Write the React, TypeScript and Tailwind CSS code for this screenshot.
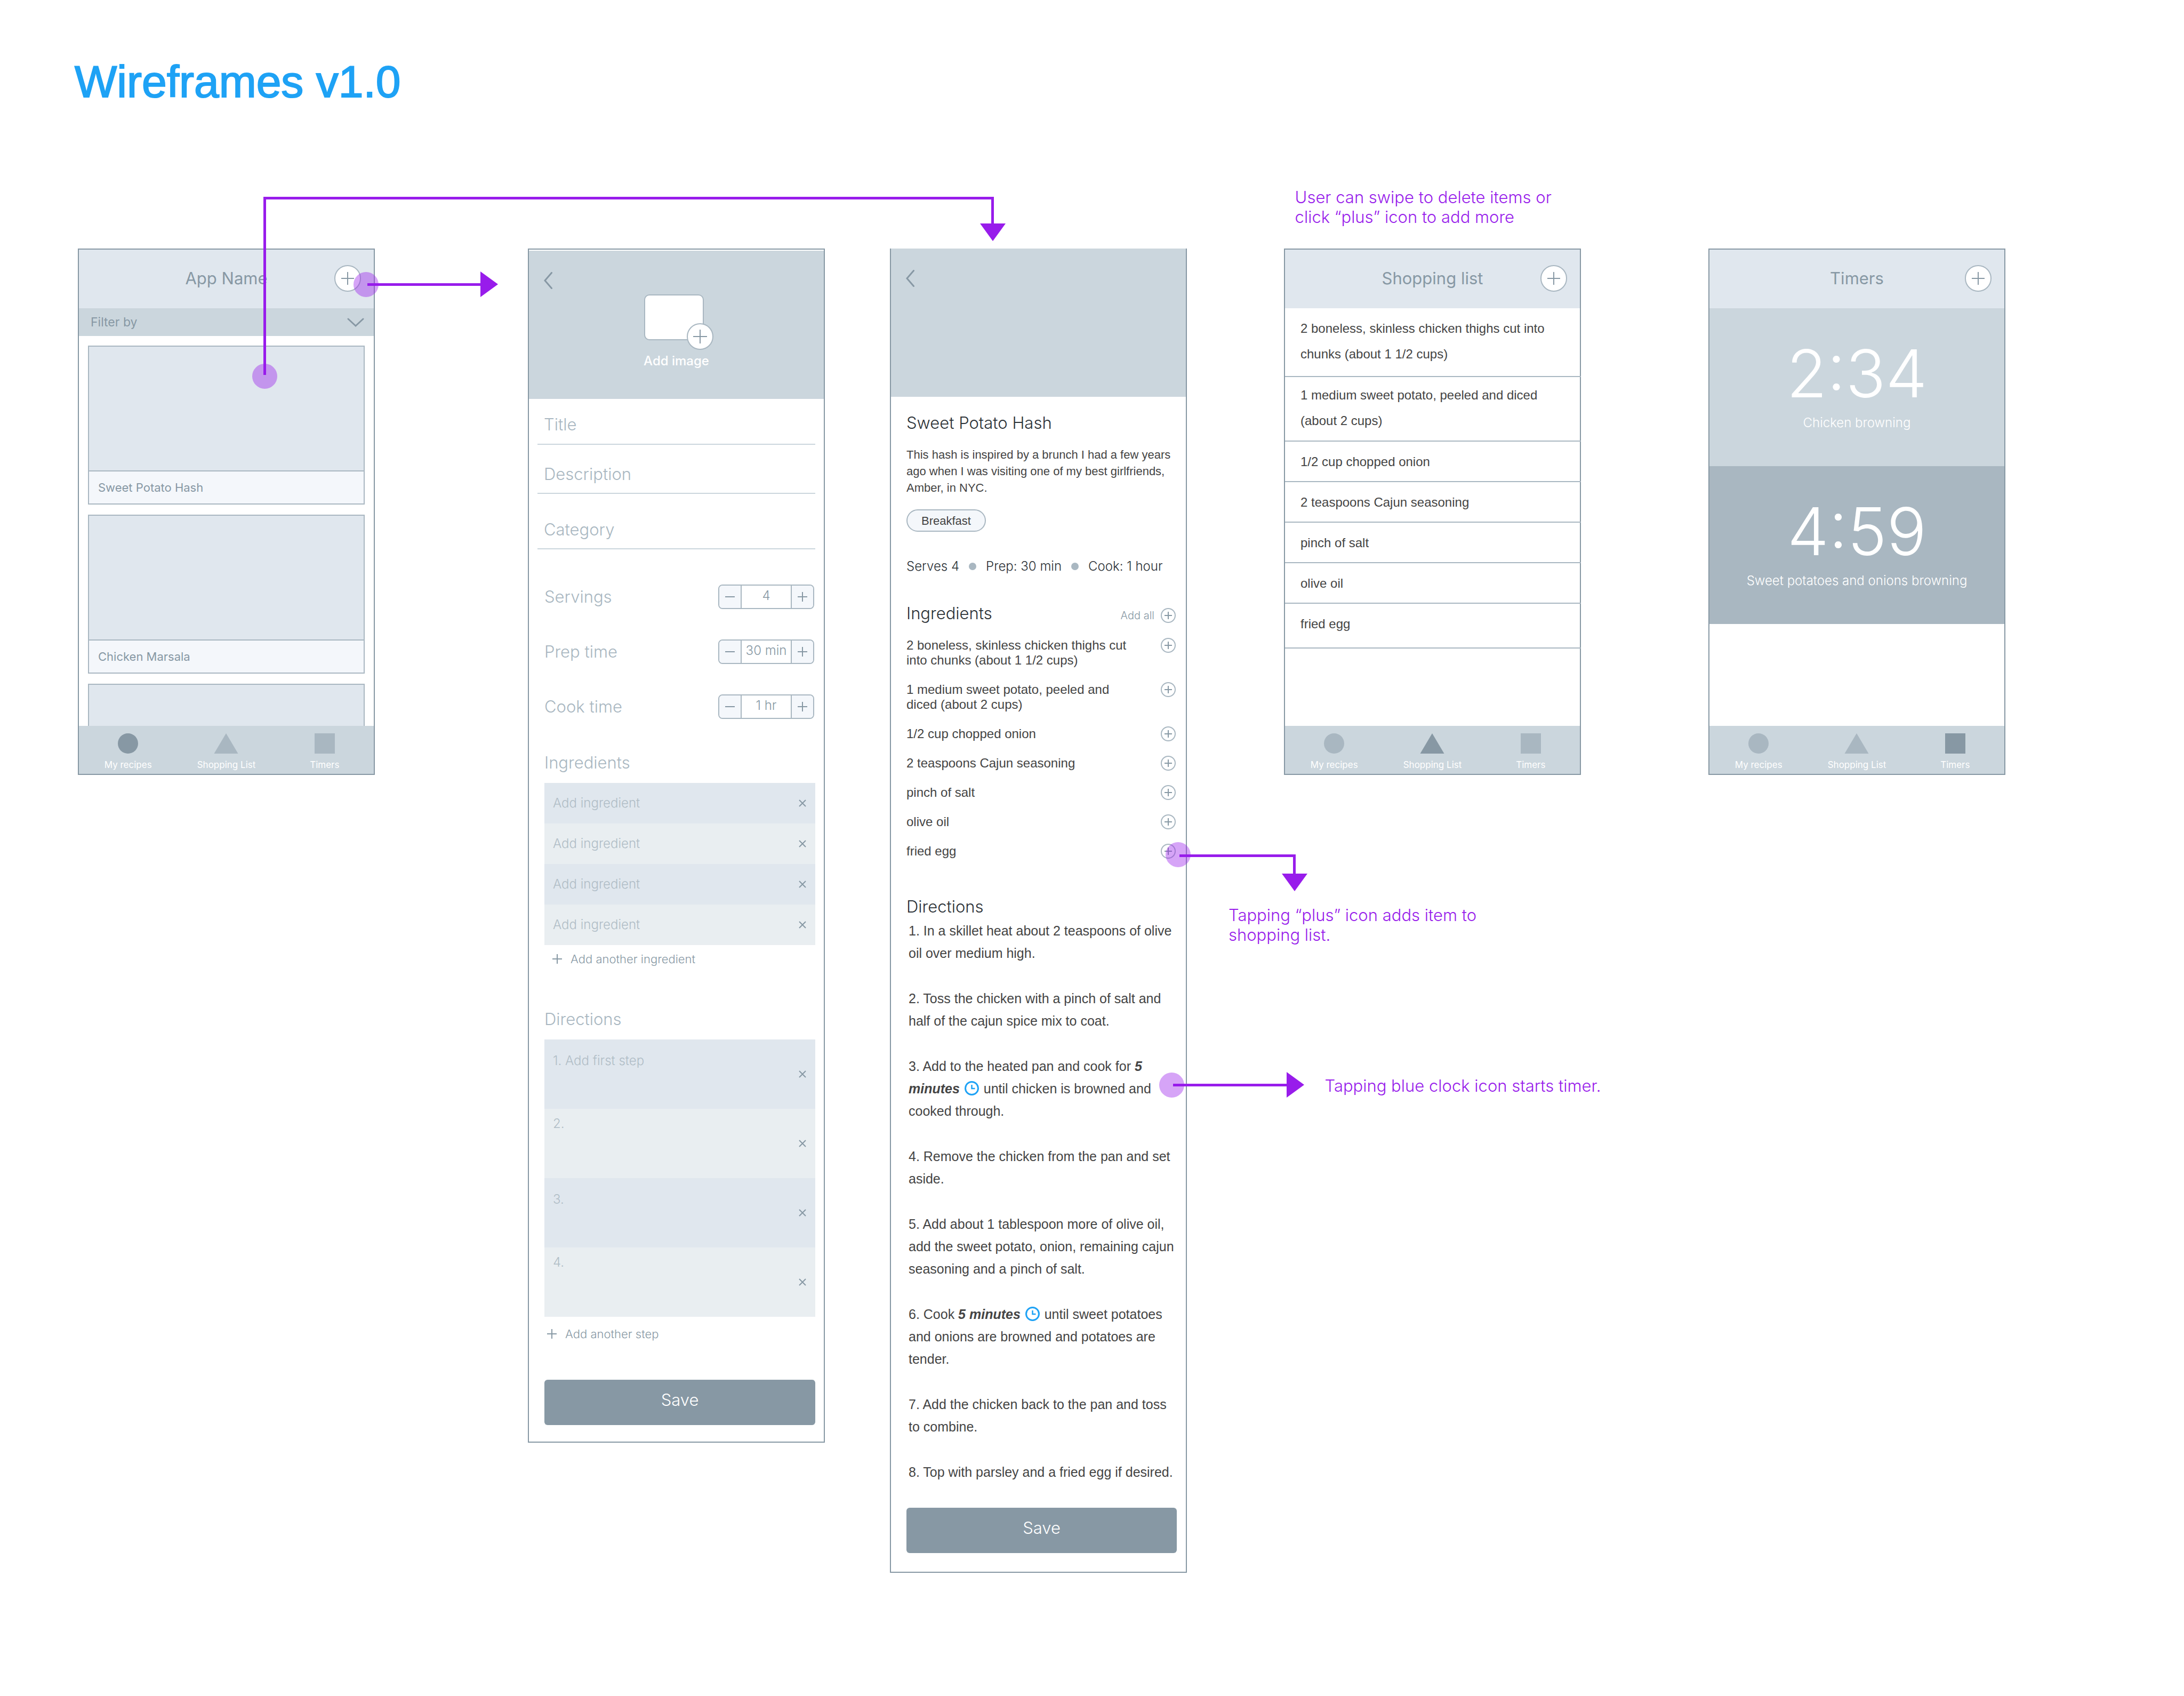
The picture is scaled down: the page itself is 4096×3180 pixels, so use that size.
import React, { useState } from "react";

const inter = "font-['Inter',sans-serif]";
const helvetica = "font-['Liberation_Sans',sans-serif]";

function PlusCircle({ label }: { label: string }) {
  return (
    <button type="button" aria-label={label} className="block size-[50px] shrink-0 justify-self-end">
      <svg viewBox="0 0 50 50" className="size-full" fill="none">
        <circle cx="25" cy="25" r="24" fill="#fff" stroke="#a9b7c1" strokeWidth="2" />
        <path d="M25 13v24M13 25h24" stroke="#8798a4" strokeWidth="2" />
      </svg>
    </button>
  );
}

function SmallPlusCircle({ label }: { label: string }) {
  return (
    <button type="button" aria-label={label} className="mr-0.5 block size-7 shrink-0">
      <svg viewBox="0 0 28 28" className="size-full" fill="none">
        <circle cx="14" cy="14" r="13" stroke="#a9b7c1" strokeWidth="2" />
        <path d="M14 7v14M7 14h14" stroke="#8798a4" strokeWidth="2" />
      </svg>
    </button>
  );
}

function Plus() {
  return (
    <svg viewBox="0 0 18 18" className="size-[18px] shrink-0" fill="none" aria-hidden="true">
      <path d="M9 0v18M0 9h18" stroke="#8798a4" strokeWidth="2" />
    </svg>
  );
}

function Minus() {
  return (
    <svg viewBox="0 0 18 18" className="size-[18px]" fill="none" aria-hidden="true">
      <path d="M0 9h18" stroke="#8798a4" strokeWidth="2" />
    </svg>
  );
}

function RemoveButton({ label }: { label: string }) {
  return (
    <button type="button" aria-label={label} className="flex w-12 items-center justify-center">
      <svg viewBox="0 0 14 14" className="size-[14px]" fill="none" aria-hidden="true">
        <path d="M1 1l12 12M13 1L1 13" stroke="#8798a4" strokeWidth="2" />
      </svg>
    </button>
  );
}

function BackButton() {
  return (
    <button type="button" aria-label="Back" className="absolute left-7 top-10 h-8 w-4">
      <svg viewBox="0 0 16 32" className="size-full" fill="none">
        <path d="M14.500 1.500L2 16l12.500 14.500" stroke="#8798a4" strokeWidth="3" strokeLinecap="round" />
      </svg>
    </button>
  );
}

function Clock() {
  return (
    <button type="button" aria-label="Start timer" className="mx-0.5 inline-block size-[27px] align-[-4px]">
      <svg viewBox="0 0 27 27" className="size-full" fill="none">
        <circle cx="13.500" cy="13.500" r="12" stroke="#1ea2f5" strokeWidth="3" />
        <path d="M13.500 7v7h6" stroke="#1ea2f5" strokeWidth="2.500" />
      </svg>
    </button>
  );
}

function AppBar({ title }: { title: string }) {
  return (
    <header className="grid h-[110px] shrink-0 grid-cols-[1fr_auto_1fr] items-center bg-[#e0e7ee] px-6 pb-0.5">
      <h2 className="col-start-2 text-[31px] leading-10 text-[#8798a4]">{title}</h2>
      <PlusCircle label="Add" />
    </header>
  );
}

function TabBar({ active }: { active: number }) {
  const tabs = [
    { label: "My recipes", shape: <circle cx="23" cy="19" r="19" /> },
    { label: "Shopping List", shape: <path d="M23 0l22.500 38H.5z" /> },
    { label: "Timers", shape: <path d="M4 0h38v38H4z" /> },
  ];
  return (
    <nav className="mt-auto grid h-[90px] shrink-0 grid-cols-3 bg-[#cbd6dd] pt-[14px]">
      {tabs.map((tab, i) => (
        <a key={tab.label} href="#" className="flex flex-col items-center gap-[11px]">
          <svg viewBox="0 0 46 38" className={i === active ? "h-[38px] w-[46px] fill-[#8798a4]" : "h-[38px] w-[46px] fill-[#a9b7c1]"} aria-hidden="true">
            {tab.shape}
          </svg>
          <span className="text-[17px] leading-5 text-white">{tab.label}</span>
        </a>
      ))}
    </nav>
  );
}

function RecipesScreen() {
  return (
    <section className="flex h-[987px] flex-col border-2 border-[#8798a4] bg-white">
      <AppBar title="App Name" />
      <div className="relative h-[52px] shrink-0 bg-[#cbd6dd]">
        <select aria-label="Filter by" className="size-full appearance-none pl-[22px] text-[23px] text-[#8798a4]">
          <option>Filter by</option>
        </select>
        <svg viewBox="0 0 32 18" className="pointer-events-none absolute right-[18px] top-[18px] h-[18px] w-8" fill="none" aria-hidden="true">
          <path d="M2 2l14 13L30 2" stroke="#8798a4" strokeWidth="3" strokeLinecap="round" />
        </svg>
      </div>
      <ul className="flex min-h-0 flex-1 flex-col gap-[19px] overflow-hidden px-[17px] pt-[18px]">
        {["Sweet Potato Hash", "Chicken Marsala", ""].map((name) => (
          <li key={name} className="flex h-[298px] shrink-0 flex-col border-2 border-[#a9b7c1]">
            <div className="flex-1 border-b-2 border-[#a9b7c1] bg-[#e0e7ee]" />
            <p className="flex h-[60px] items-center bg-[#f4f7fb] px-[17px] text-[22px] text-[#8798a4]">{name}</p>
          </li>
        ))}
      </ul>
      <TabBar active={0} />
    </section>
  );
}

function Field({ label, className }: { label: string; className: string }) {
  return (
    <div className={`mx-4 flex items-center border-b-2 border-[#cbd6dd] ${className}`}>
      <input
        aria-label={label}
        placeholder={label}
        className="w-full pl-3 text-[31px] leading-10 font-light text-[#8798a4] outline-none placeholder:text-[#a9b7c1]"
      />
    </div>
  );
}

function Stepper({ label, initial }: { label: string; initial: string }) {
  const [value, setValue] = useState(initial);
  const id = label.toLowerCase().replace(" ", "-");
  const step = (by: number) =>
    setValue((v) => v.replace(/\d+/, (n) => String(Math.max(0, Number(n) + by))));
  return (
    <div className="flex h-[46px] items-center justify-between">
      <label htmlFor={id} className="text-[31px] leading-10 font-light text-[#a9b7c1]">{label}</label>
      <div className="mr-0.5 flex h-full w-[180px] overflow-hidden rounded-lg border-2 border-[#a9b7c1]">
        <button type="button" aria-label={`Less ${label}`} onClick={() => step(-1)} className="flex w-10 items-center justify-center bg-[#f4f7fb]">
          <Minus />
        </button>
        <input
          id={id}
          value={value}
          onChange={(e) => setValue(e.target.value)}
          className="min-w-0 flex-1 border-x-2 border-[#a9b7c1] pb-1 text-center text-[24px] font-light text-[#8798a4] outline-none"
        />
        <button type="button" aria-label={`More ${label}`} onClick={() => step(1)} className="flex w-10 items-center justify-center bg-[#f4f7fb]">
          <Plus />
        </button>
      </div>
    </div>
  );
}

function SaveButton() {
  return (
    <button type="submit" className="h-[85px] w-full rounded-md bg-[#8798a4] pb-2 text-[31px] font-light text-white">
      Save
    </button>
  );
}

function AddRecipeScreen() {
  const formHeading = "text-[31px] leading-10 font-light text-[#a9b7c1]";
  return (
    <section className="border-2 border-[#8798a4] bg-white pt-0.5">
      <div className="relative flex h-[278px] flex-col items-center bg-[#cbd6dd] pt-[82px]">
        <BackButton />
        <button type="button" className="flex flex-col items-center gap-[23px]">
          <span className="relative mr-2 h-[86px] w-[112px] rounded-[10px] border-2 border-[#a9b7c1] bg-white">
            <svg viewBox="0 0 50 50" className="absolute -right-5 -bottom-5 size-[50px]" fill="none" aria-hidden="true">
              <circle cx="25" cy="25" r="24" fill="#fff" stroke="#a9b7c1" strokeWidth="2" />
              <path d="M25 12v26M12 25h26" stroke="#8798a4" strokeWidth="2" />
            </svg>
          </span>
          <span className="text-[24px] leading-8 font-medium text-white">Add image</span>
        </button>
      </div>
      <form onSubmit={(e) => e.preventDefault()}>
        <Field label="Title" className="h-[86px] pt-3" />
        <Field label="Description" className="h-[92px] pt-5" />
        <Field label="Category" className="h-[104px] pt-8" />
        <div className="pt-[66px] pr-4 pb-[31px] pl-[29px]">
          <div className="flex flex-col gap-[57px]">
            <Stepper label="Servings" initial="4" />
            <Stepper label="Prep time" initial="30 min" />
            <Stepper label="Cook time" initial="1 hr" />
          </div>
          <h3 className={`mt-[62px] mb-[18px] ${formHeading}`}>Ingredients</h3>
          <ul>
            {[1, 2, 3, 4].map((n) => (
              <li key={n} className="flex h-[76px] odd:bg-[#e0e7ee] even:bg-[#e9eef1]">
                <input
                  aria-label={`Ingredient ${n}`}
                  placeholder="Add ingredient"
                  className="min-w-0 flex-1 pl-4 text-[24px] font-light text-[#8798a4] outline-none placeholder:text-[#b0bdc6]"
                />
                <RemoveButton label={`Remove ingredient ${n}`} />
              </li>
            ))}
          </ul>
          <button type="button" className="mt-[10px] flex h-8 items-center gap-4 pl-[15px] text-[22px] font-light text-[#8798a4]">
            <Plus /> Add another ingredient
          </button>
          <h3 className={`mt-[77px] mb-[18px] ${formHeading}`}>Directions</h3>
          <ol>
            {["1. Add first step", "2.", "3.", "4."].map((hint, i) => (
              <li key={hint} className="flex h-[130px] odd:bg-[#e0e7ee] even:bg-[#e9eef1]">
                <textarea
                  aria-label={`Step ${i + 1}`}
                  placeholder={hint}
                  className={`min-w-0 flex-1 resize-none pl-4 text-[24px] leading-8 font-light text-[#8798a4] outline-none placeholder:text-[#b0bdc6] ${i % 2 ? "pt-3" : "pt-6"}`}
                />
                <RemoveButton label={`Remove step ${i + 1}`} />
              </li>
            ))}
          </ol>
          <button type="button" className="mt-4 mb-[70px] flex h-8 items-center gap-4 pl-[5px] text-[22px] font-light text-[#8798a4]">
            <Plus /> Add another step
          </button>
          <SaveButton />
        </div>
      </form>
    </section>
  );
}

const recipeIngredients = [
  "2 boneless, skinless chicken thighs cut\ninto chunks (about 1 1/2 cups)",
  "1 medium sweet potato, peeled and\ndiced (about 2 cups)",
  "1/2 cup chopped onion",
  "2 teaspoons Cajun seasoning",
  "pinch of salt",
  "olive oil",
  "fried egg",
];

const timed = "font-bold italic";

const steps: React.ReactNode[][] = [
  ["1. In a skillet heat about 2 teaspoons of olive", "oil over medium high."],
  ["2. Toss the chicken with a pinch of salt and", "half of the cajun spice mix to coat."],
  [
    <>3. Add to the heated pan and cook for <b className={timed}>5</b></>,
    <><b className={timed}>minutes</b> <Clock /> until chicken is browned and</>,
    "cooked through.",
  ],
  ["4. Remove the chicken from the pan and set", "aside."],
  ["5. Add about 1 tablespoon more of olive oil,", "add the sweet potato, onion, remaining cajun", "seasoning and a pinch of salt."],
  [
    <>6. Cook <b className={timed}>5 minutes</b> <Clock /> until sweet potatoes</>,
    "and onions are browned and potatoes are",
    "tender.",
  ],
  ["7. Add the chicken back to the pan and toss", "to combine."],
  ["8. Top with parsley and a fried egg if desired."],
];

function RecipeScreen() {
  const heading = "text-[31px] leading-10 font-light text-[#2b3136]";
  return (
    <section className="border-x-2 border-b-2 border-[#8798a4] bg-white">
      <div className="relative h-[278px] bg-[#cbd6dd]">
        <BackButton />
      </div>
      <div className="pt-[29px] pr-[17px] pb-[35px] pl-[29px] text-[#444]">
        <h2 className={heading}>Sweet Potato Hash</h2>
        <p className={`mt-6 whitespace-pre text-[22px] leading-[31px] ${helvetica}`}>
          {"This hash is inspired by a brunch I had a few years\nago when I was visiting one of my best girlfriends,\nAmber, in NYC."}
        </p>
        <a href="#" className={`mt-[25px] flex h-[42px] w-[149px] items-center justify-center rounded-full border-2 border-[#a9b7c1] bg-[#f4f7fb] text-[22px] ${helvetica}`}>
          Breakfast
        </a>
        <ul className="mt-[49px] flex items-center gap-[18px] whitespace-nowrap text-[24px] leading-8 font-light text-[#2b3136]">
          <li>Serves 4</li>
          <li className="size-[14px] rounded-full bg-[#a9b7c1]" />
          <li>Prep: 30 min</li>
          <li className="size-[14px] rounded-full bg-[#a9b7c1]" />
          <li>Cook: 1 hour</li>
        </ul>
        <div className="mt-[52px] flex items-center justify-between">
          <h3 className={heading}>Ingredients</h3>
          <div className="mt-2 flex items-center gap-3 text-[20px] font-light text-[#8798a4]">
            Add all
            <SmallPlusCircle label="Add all ingredients" />
          </div>
        </div>
        <ul className={`mt-[26px] flex flex-col gap-[27px] ${helvetica}`}>
          {recipeIngredients.map((item) => (
            <li key={item} className="flex items-start justify-between">
              <span className="whitespace-pre text-[24px] leading-7">{item}</span>
              <SmallPlusCircle label={`Add ${item}`} />
            </li>
          ))}
        </ul>
        <h3 className={`mt-[70px] ${heading}`}>Directions</h3>
        <ol className={`mt-1 mb-[46px] flex flex-col gap-[43px] pl-1 text-[25px] leading-[42px] ${helvetica}`}>
          {steps.map((lines, i) => (
            <li key={i}>
              {lines.map((line, j) => (
                <span key={j} className="block h-[42px] whitespace-nowrap">{line}</span>
              ))}
            </li>
          ))}
        </ol>
        <SaveButton />
      </div>
    </section>
  );
}

const shoppingItems = [
  { text: "2 boneless, skinless chicken thighs cut into\nchunks (about 1 1/2 cups)", pad: "pt-[14px] pb-[17px]" },
  { text: "1 medium sweet potato, peeled and diced\n(about 2 cups)", pad: "pt-[10px] pb-[13px]" },
  { text: "1/2 cup chopped onion", pad: "pt-[14px] pb-3" },
  { text: "2 teaspoons Cajun seasoning", pad: "pt-[14px] pb-3" },
  { text: "pinch of salt", pad: "pt-[14px] pb-3" },
  { text: "olive oil", pad: "pt-[14px] pb-3" },
  { text: "fried egg", pad: "pt-[14px] pb-5" },
];

function ShoppingScreen() {
  return (
    <section className="flex h-[987px] flex-col border-2 border-[#8798a4] bg-white">
      <AppBar title="Shopping list" />
      <ul className={`text-[24px] leading-[48px] text-[#444] ${helvetica}`}>
        {shoppingItems.map((item) => (
          <li key={item.text} className={`-mr-0.5 whitespace-pre border-b-2 border-[#a9b7c1] pl-[29px] ${item.pad}`}>
            {item.text}
          </li>
        ))}
      </ul>
      <TabBar active={1} />
    </section>
  );
}

function TimersScreen() {
  const timers = [
    { time: "2:34", label: "Chicken browning", bg: "bg-[#cbd6dd]" },
    { time: "4:59", label: "Sweet potatoes and onions browning", bg: "bg-[#a9b7c1]" },
  ];
  return (
    <section className="flex h-[987px] flex-col border-2 border-[#8798a4] bg-white">
      <AppBar title="Timers" />
      {timers.map((t) => (
        <div key={t.time} className={`flex h-[296px] flex-col items-center pt-[62px] font-light whitespace-nowrap text-white ${t.bg}`}>
          <p className="text-[124px] leading-[120px]">{t.time}</p>
          <p className="mt-[17px] text-[24px] leading-8">{t.label}</p>
        </div>
      ))}
      <TabBar active={2} />
    </section>
  );
}

function Dot({ className }: { className: string }) {
  return <span className={`absolute size-[47px] rounded-full bg-[#981ceb]/40 ${className}`} />;
}

function HeadRight() {
  return (
    <svg viewBox="0 0 33 48" className="h-12 w-[33px] shrink-0 fill-[#981ceb]" aria-hidden="true">
      <path d="M0 0l33 24L0 48z" />
    </svg>
  );
}

function HeadDown({ className }: { className: string }) {
  return (
    <svg viewBox="0 0 48 33" className={`absolute h-[33px] w-12 fill-[#981ceb] ${className}`} aria-hidden="true">
      <path d="M0 0h48L24 33z" />
    </svg>
  );
}

const note = "absolute whitespace-pre text-[31px] leading-[37px] font-light text-[#981ceb]";

export default function App() {
  return (
    <main className={`min-h-screen overflow-hidden bg-white pt-[105px] pb-[231px] ${inter}`}>
      <h1 className={`px-[140px] text-[84px] leading-24 text-[#1ea2f5] [-webkit-text-stroke:2px_#1ea2f5] ${helvetica}`}>
        Wireframes v1.0
      </h1>
      <div className="mt-[265px] grid grid-cols-[146fr_557fr_287fr_557fr_122fr_557fr_182fr_557fr_239fr_557fr_335fr] items-start">
        <div className="relative z-10 col-start-2 min-w-0">
          <RecipesScreen />
          <div className="pointer-events-none absolute -top-[97px] left-[62.4%] h-[334px] w-[246.1%] border-t-[5px] border-l-[5px] border-[#981ceb]">
            <Dot className="-bottom-[26px] -left-[26px]" />
            <span className="absolute -top-[5px] right-0 h-[55px] w-[5px] bg-[#981ceb]" />
            <HeadDown className="top-[45px] -right-[22px]" />
          </div>
          <div className="pointer-events-none absolute top-[43px] left-[97.5%] flex w-[44%] items-center">
            <Dot className="-left-[26px]" />
            <span className="h-[5px] flex-1 bg-[#981ceb]" />
            <HeadRight />
          </div>
        </div>

        <div className="col-start-4 min-w-0">
          <AddRecipeScreen />
        </div>

        <div className="relative z-10 col-start-6 min-w-0">
          <RecipeScreen />
          <div className="pointer-events-none absolute top-[1136px] left-[97.5%] h-[69px] w-[39.2%]">
            <Dot className="-top-[23px] -left-[26px]" />
            <span className="absolute inset-x-0 top-0 h-10 border-t-[5px] border-r-[5px] border-[#981ceb]" />
            <HeadDown className="top-[36px] -right-[22px]" />
          </div>
          <p className={`${note} top-[1231px] left-[114%]`}>{"Tapping “plus” icon adds item to\nshopping list."}</p>
          <div className="pointer-events-none absolute top-[1544px] left-[95.3%] flex w-[44.2%] items-center">
            <Dot className="-left-[26px]" />
            <span className="h-[5px] flex-1 bg-[#981ceb]" />
            <HeadRight />
          </div>
          <p className={`${note} top-[1551px] left-[146.400%]`}>Tapping blue clock icon starts timer.</p>
        </div>

        <div className="relative col-start-8 min-w-0">
          <p className={`${note} -top-[115px] left-[3.7%]`}>{"User can swipe to delete items or\nclick “plus” icon to add more"}</p>
          <ShoppingScreen />
        </div>

        <div className="col-start-10 min-w-0">
          <TimersScreen />
        </div>
      </div>
    </main>
  );
}
